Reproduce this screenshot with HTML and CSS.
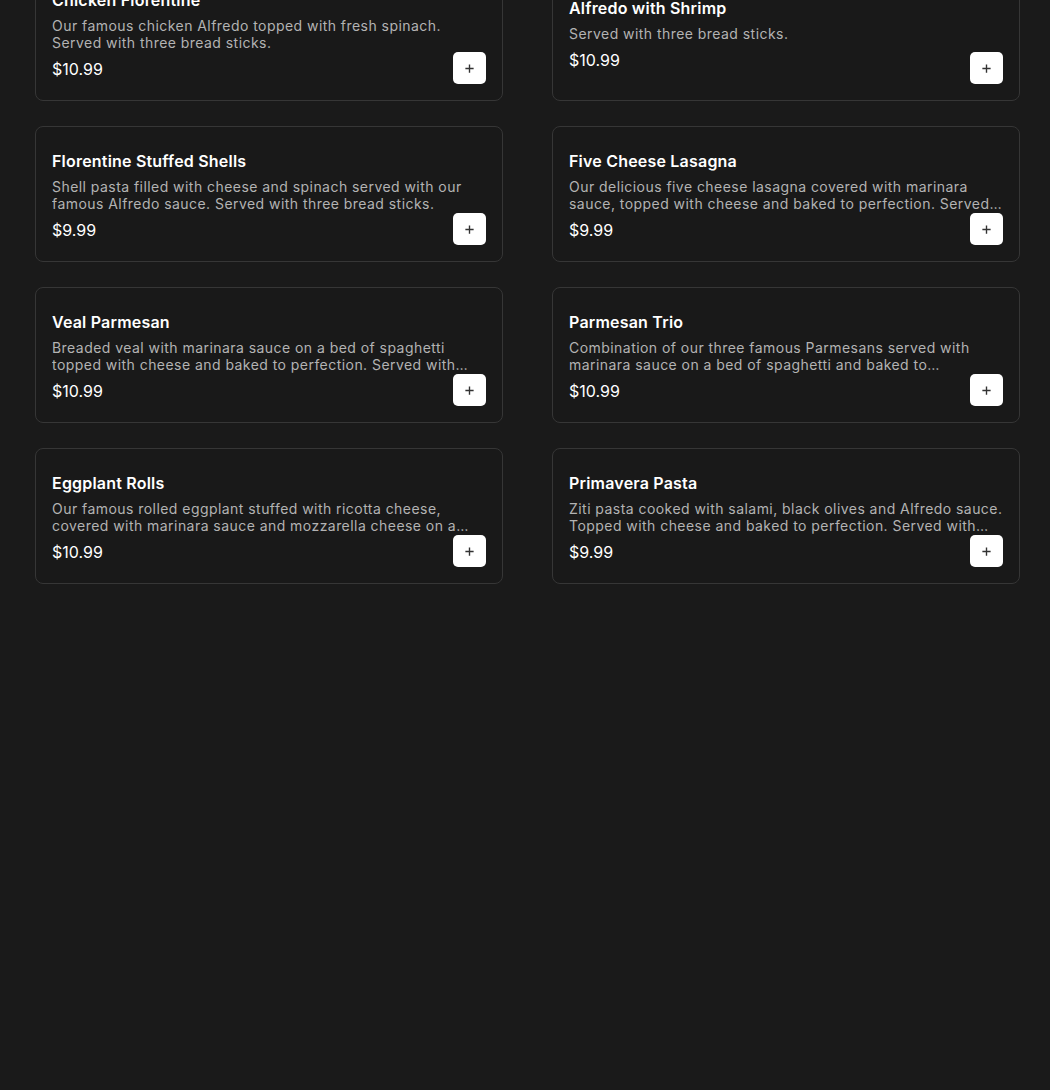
FILE: index.html
```
<!DOCTYPE html>
<html lang="en">
<head>
  <meta charset="UTF-8" />
  <meta name="viewport" content="width=device-width, initial-scale=1.0"/>
  <title>Menu – Pasta</title>
  <link rel="stylesheet" href="styles.css">
</head>
<body>

<div class="menu-grid">
  <div class="menu-item">
    <div class="item-info">
      <h3>Chicken Florentine</h3>
      <p class="desc">Our famous chicken Alfredo topped with fresh spinach. Served with three bread sticks.</p>
      <div class="price">$10.99</div>
    </div>
    <button class="add-btn" aria-label="Add"><svg viewBox="0 0 12 12"><path d="M6 1.5v9M1.5 6h9"/></svg></button>
  </div>

  <div class="menu-item">
    <div class="item-info">
      <h3>Alfredo with Shrimp</h3>
      <p class="desc">Served with three bread sticks.</p>
      <div class="price">$10.99</div>
    </div>
    <button class="add-btn" aria-label="Add"><svg viewBox="0 0 12 12"><path d="M6 1.5v9M1.5 6h9"/></svg></button>
  </div>

  <div class="menu-item">
    <div class="item-info">
      <h3>Florentine Stuffed Shells</h3>
      <p class="desc">Shell pasta filled with cheese and spinach served with our famous Alfredo sauce. Served with three bread sticks.</p>
      <div class="price">$9.99</div>
    </div>
    <button class="add-btn" aria-label="Add"><svg viewBox="0 0 12 12"><path d="M6 1.5v9M1.5 6h9"/></svg></button>
  </div>

  <div class="menu-item">
    <div class="item-info">
      <h3>Five Cheese Lasagna</h3>
      <p class="desc">Our delicious five cheese lasagna covered with marinara sauce, topped with cheese and baked to perfection. Served with three bread sticks.</p>
      <div class="price">$9.99</div>
    </div>
    <button class="add-btn" aria-label="Add"><svg viewBox="0 0 12 12"><path d="M6 1.5v9M1.5 6h9"/></svg></button>
  </div>

  <div class="menu-item">
    <div class="item-info">
      <h3>Veal Parmesan</h3>
      <p class="desc">Breaded veal with marinara sauce on a bed of spaghetti topped with cheese and baked to perfection. Served with three bread sticks.</p>
      <div class="price">$10.99</div>
    </div>
    <button class="add-btn" aria-label="Add"><svg viewBox="0 0 12 12"><path d="M6 1.5v9M1.5 6h9"/></svg></button>
  </div>

  <div class="menu-item">
    <div class="item-info">
      <h3>Parmesan Trio</h3>
      <p class="desc">Combination of our three famous Parmesans served with marinara sauce on a bed of spaghetti and baked to perfection. Served with three bread sticks.</p>
      <div class="price">$10.99</div>
    </div>
    <button class="add-btn" aria-label="Add"><svg viewBox="0 0 12 12"><path d="M6 1.5v9M1.5 6h9"/></svg></button>
  </div>

  <div class="menu-item">
    <div class="item-info">
      <h3>Eggplant Rolls</h3>
      <p class="desc">Our famous rolled eggplant stuffed with ricotta cheese, covered with marinara sauce and mozzarella cheese on a bed of spaghetti. Served with three bread sticks.</p>
      <div class="price">$10.99</div>
    </div>
    <button class="add-btn" aria-label="Add"><svg viewBox="0 0 12 12"><path d="M6 1.5v9M1.5 6h9"/></svg></button>
  </div>

  <div class="menu-item">
    <div class="item-info">
      <h3>Primavera Pasta</h3>
      <p class="desc">Ziti pasta cooked with salami, black olives and Alfredo sauce. Topped with cheese and baked to perfection. Served with three bread sticks.</p>
      <div class="price">$9.99</div>
    </div>
    <button class="add-btn" aria-label="Add"><svg viewBox="0 0 12 12"><path d="M6 1.5v9M1.5 6h9"/></svg></button>
  </div>
</div>

</body>
</html>
```

FILE: styles.css
```
body {
  margin: 0;
  background: #1a1a1a;
  color: #ffffff;
  font-family: Inter, 'DejaVu Sans', sans-serif;
}
.menu-grid {
  display: grid;
  grid-template-columns: 1fr 1fr;
  column-gap: 49px;
  row-gap: 25px;
  /* list is scrolled a little: first row is cut at the top */
  margin-top: -35px;
  padding: 0 30px 40px 35px;
}
.menu-item {
  position: relative;
  box-sizing: border-box;
  height: 136px;
  padding: 16px;
  border: 1px solid #363636;
  border-radius: 8px;
  background: #191919;
  display: flex;
  align-items: center;
}
.item-info {
  width: 100%;
  padding-top: 2px;
}
.item-info h3 {
  margin: 0 0 7px;
  font-size: 16px;
  font-weight: 600;
  line-height: 20px;
  letter-spacing: 0.2px;
}
.desc {
  margin: 0 0 8px;
  font-size: 14px;
  line-height: 17px;
  letter-spacing: 0.45px;
  color: #b3b3b3;
  display: -webkit-box;
  -webkit-line-clamp: 2;
  -webkit-box-orient: vertical;
  overflow: hidden;
}
.price {
  font-size: 16px;
  line-height: 20px;
}
.add-btn {
  position: absolute;
  right: 16px;
  bottom: 16px;
  width: 33px;
  height: 32px;
  padding: 0;
  border: none;
  border-radius: 5px;
  background: #ffffff;
  display: flex;
  align-items: center;
  justify-content: center;
  cursor: pointer;
}
.add-btn svg {
  width: 11px;
  height: 11px;
  fill: none;
  stroke: #333333;
  stroke-width: 1.5;
}
```
